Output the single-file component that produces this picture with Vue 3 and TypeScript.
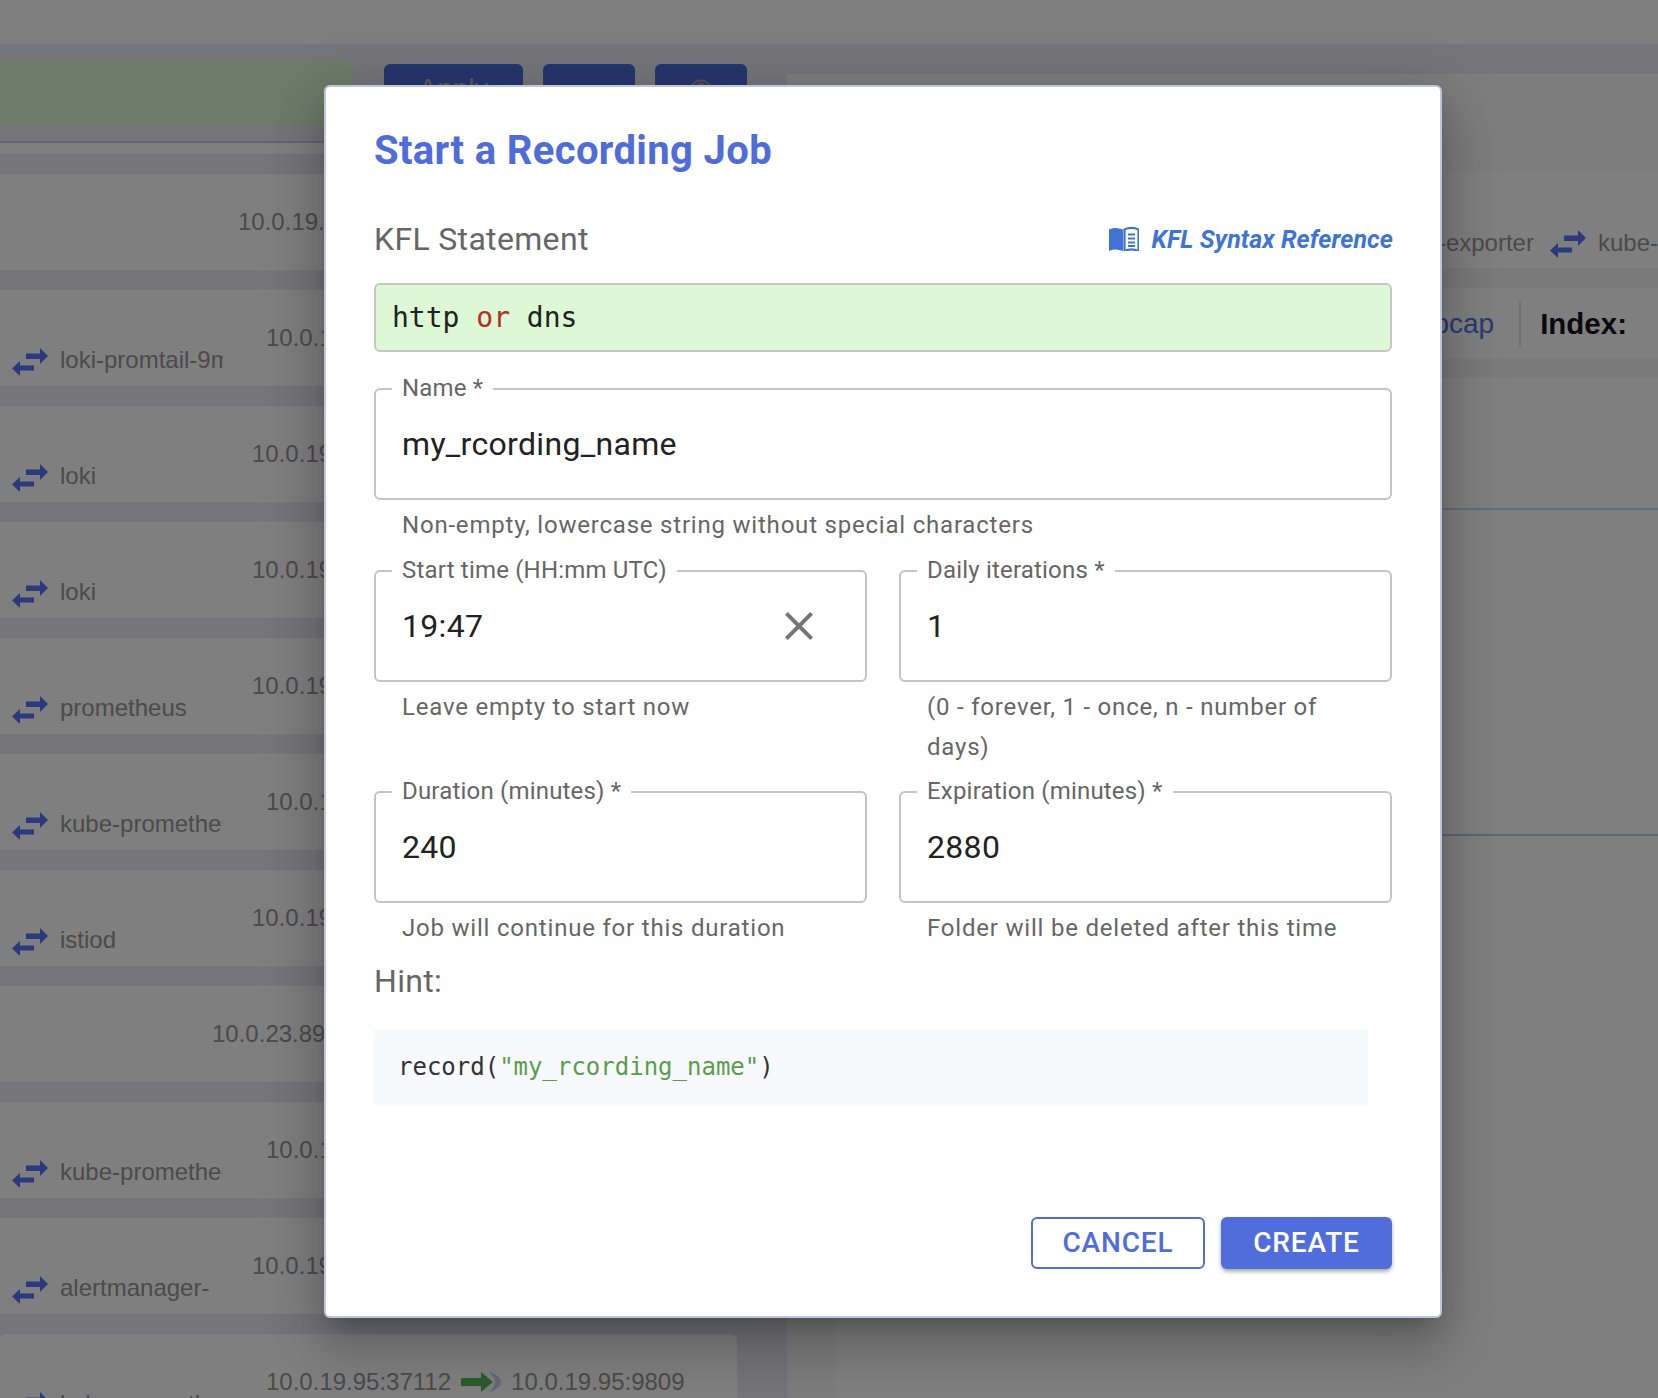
<script setup lang="ts">
// Background traffic rows sit under the dimmed backdrop; the dialog is the real content.
interface TrafficRow {
  name: string
  ip: string
  offset: 'a' | 'b' | 'c' | 'd'
}

const rows: TrafficRow[] = [
  { name: '', ip: '10.0.19.95', offset: 'c' },
  { name: 'loki-promtail-9mvqf', ip: '10.0.19.95', offset: 'a' },
  { name: 'loki', ip: '10.0.19.95', offset: 'b' },
  { name: 'loki', ip: '10.0.19.95', offset: 'b' },
  { name: 'prometheus', ip: '10.0.19.95', offset: 'b' },
  { name: 'kube-prometheus-stack', ip: '10.0.19.95', offset: 'a' },
  { name: 'istiod', ip: '10.0.19.95', offset: 'b' },
  { name: '', ip: '10.0.23.89', offset: 'd' },
  { name: 'kube-prometheus-stack', ip: '10.0.19.95', offset: 'a' },
  { name: 'alertmanager-', ip: '10.0.19.95', offset: 'b' },
]
</script>

<template>
  <div class="page">
    <div class="topbar" />
    <div class="main">
      <div class="left">
        <div class="filter">
          <div class="filter__input" />
          <button type="button" class="filter__btn filter__btn--apply">Apply</button>
          <button type="button" class="filter__btn filter__btn--icon filter__btn--heart">
            <svg width="26" height="22" viewBox="0 0 30 24"><path d="M3 8c0-6 8-6 12-2 4-4 12-4 12 2 0 6-6 10-12 14C9 18 3 14 3 8z" fill="#a4a4a4" /></svg>
          </button>
          <button type="button" class="filter__btn filter__btn--icon">
            <svg width="24" height="24" viewBox="0 0 24 24">
              <circle cx="12" cy="12" r="10.5" fill="none" stroke="#a4a4a4" stroke-width="2" />
              <circle cx="12" cy="8" r="3.5" fill="none" stroke="#a4a4a4" stroke-width="2" />
            </svg>
          </button>
        </div>
        <div class="rows">
          <div v-for="(row, i) in rows" :key="i" class="row">
            <div class="row__name">
              <template v-if="row.name">
                <svg class="swap" viewBox="0 0 36 28"><path d="M14 5.5H28V0L36 8 28 16V11H14Z M8 13 0 20.5 8 28V22.5H22V17.5H8Z" /></svg>
                <span>{{ row.name }}</span>
              </template>
            </div>
            <div class="row__ip" :class="`row__ip--${row.offset}`">{{ row.ip }}</div>
          </div>
          <div class="row row--last">
            <div class="row__name">
              <svg class="swap" viewBox="0 0 36 28"><path d="M14 5.5H28V0L36 8 28 16V11H14Z M8 13 0 20.5 8 28V22.5H22V17.5H8Z" /></svg>
              <span>kube-prometheus-stack</span>
            </div>
            <div class="row__ip row__ip--a">
              <span>10.0.19.95:37112</span>
              <svg class="flow" viewBox="0 0 40 20">
                <path d="M28 0c7 2 12 6 12 10s-5 8-12 10c4-3 6-7 6-10s-2-7-6-10z" fill="#c2d0f5" />
                <path d="M2 6H20V0L32 10 20 20V14H2a4 4 0 0 1 0-8z" fill="#58b85c" />
              </svg>
              <span>10.0.19.95:9809</span>
            </div>
          </div>
        </div>
      </div>
      <div class="right">
        <div class="right__head" />
        <div class="right__names">
          <span>node-exporter</span>
          <svg class="swap" viewBox="0 0 36 28"><path d="M14 5.5H28V0L36 8 28 16V11H14Z M8 13 0 20.5 8 28V22.5H22V17.5H8Z" /></svg>
          <span>kube-</span>
        </div>
        <div class="right__tabs">
          <span class="right__link">pcap</span>
          <span class="right__divider" />
          <strong>Index:</strong>
        </div>
        <div class="right__method">GET</div>
        <div class="right__section" />
      </div>
    </div>

    <div class="backdrop" />

    <section class="dialog" role="dialog" aria-label="Start a Recording Job">
      <h2 class="dialog__title">Start a Recording Job</h2>

      <div class="dialog__kfl-head">
        <span class="dialog__subtitle">KFL Statement</span>
        <a class="dialog__link">
          <svg width="30" height="24" viewBox="0 0 30 24">
            <path d="M0 2.5C4 .5 9 .5 14 2.5V24C9 22 4 22 0 24Z" fill="#3f74d4" />
            <path d="M15.5 2.5C20 .5 25 .5 29.5 2.5V24C25 22 20 22 15.5 24Z" fill="none" stroke="#3f74d4" stroke-width="2.2" />
            <path d="M19 7.5h7M19 11.5h7M19 15.5h7M19 19h7" stroke="#3f74d4" stroke-width="2" />
          </svg>
          KFL Syntax Reference
        </a>
      </div>

      <div class="kfl-input">http <span class="kfl-input__op">or</span> dns</div>

      <div class="field field--name">
        <div class="field__box">
          <label class="field__label">Name *</label>
          <span class="field__value">my_rcording_name</span>
        </div>
        <p class="field__help">Non-empty, lowercase string without special characters</p>
      </div>

      <div class="field-grid">
        <div class="field">
          <div class="field__box">
            <label class="field__label">Start time (HH:mm UTC)</label>
            <span class="field__value">19:47</span>
            <svg class="field__clear" width="48" height="48" viewBox="0 0 24 24">
              <path d="M19 6.41 17.59 5 12 10.59 6.41 5 5 6.41 10.59 12 5 17.59 6.41 19 12 13.41 17.59 19 19 17.59 13.41 12z" fill="#757575" />
            </svg>
          </div>
          <p class="field__help">Leave empty to start now</p>
        </div>
        <div class="field">
          <div class="field__box">
            <label class="field__label">Daily iterations *</label>
            <span class="field__value">1</span>
          </div>
          <p class="field__help">(0 - forever, 1 - once, n - number of days)</p>
        </div>
      </div>

      <div class="field-grid field-grid--last">
        <div class="field">
          <div class="field__box">
            <label class="field__label">Duration (minutes) *</label>
            <span class="field__value">240</span>
          </div>
          <p class="field__help">Job will continue for this duration</p>
        </div>
        <div class="field">
          <div class="field__box">
            <label class="field__label">Expiration (minutes) *</label>
            <span class="field__value">2880</span>
          </div>
          <p class="field__help">Folder will be deleted after this time</p>
        </div>
      </div>

      <div class="dialog__hint">Hint:</div>
      <pre class="code">record(<span class="code__str">"my_rcording_name"</span>)</pre>

      <footer class="dialog__actions">
        <button type="button" class="btn btn--outline">Cancel</button>
        <button type="button" class="btn btn--solid">Create</button>
      </footer>
    </section>
  </div>
</template>

<style scoped>
.page {
  position: relative;
  height: 1398px;
  overflow: hidden;
  background: #e9e9f3;
  font-family: "Liberation Sans", Arial, sans-serif;
}

.topbar {
  height: 44px;
  background: #fcfcfe;
}

.main {
  display: flex;
  gap: 50px;
  padding-top: 16px;
}

.left {
  flex: 0 0 737px;
  min-width: 0;
}

.filter {
  display: flex;
  gap: 20px;
  height: 81px;
  border-bottom: 2px solid #c6c8f0;
  box-sizing: content-box;
}
.filter__input {
  flex: none;
  width: 352px;
  height: 65px;
  margin-right: 12px;
  border-radius: 0 6px 6px 0;
  background: #d8f8d2;
}
.filter__btn {
  display: flex;
  flex: none;
  height: 60px;
  margin-top: 4px;
  border: none;
  border-radius: 6px;
  background: #4f6cd9;
  color: #b4b4b4;
  font-family: inherit;
  justify-content: center;
}
.filter__btn--apply {
  width: 139px;
  padding: 9px 0 0;
  font-size: 28px;
}
.filter__btn--icon {
  width: 92px;
  padding: 15px 0 0;
}
.filter__btn--heart {
  padding-top: 18px;
}

.rows {
  padding-top: 11px;
  background: linear-gradient(#fff 11px, transparent 11px);
}
.row {
  display: flex;
  height: 96px;
  margin-top: 20px;
  align-items: center;
  background: #fff;
  color: #969696;
  font-size: 24px;
}
.row--last {
  border-radius: 6px 6px 0 0;
}
.row__name {
  display: flex;
  flex: 0 0 223px;
  align-self: flex-end;
  box-sizing: border-box;
  width: 223px;
  height: 28px;
  margin-right: -11px;
  margin-bottom: 10px;
  padding-left: 12px;
  overflow: hidden;
  align-items: center;
  gap: 12px;
  white-space: nowrap;
}
.row__name span {
  margin-bottom: 4px;
}
.row__ip {
  display: flex;
  align-items: center;
  white-space: pre;
}
.row__ip--a { margin-left: 54px; }
.row__ip--b { margin-left: 40px; }
.row__ip--c { margin-left: 26px; }
.row__ip--d { margin-left: 0; }

.swap {
  flex: 0 0 36px;
  width: 36px;
  height: 28px;
  fill: #5674f8;
}
.flow {
  width: 40px;
  height: 20px;
  margin: 0 10px;
}

.right {
  flex: 1;
  min-width: 0;
  margin-top: 14px;
  border-radius: 6px 0 0 0;
  background: #fff;
  box-shadow: inset 48px 0 0 #f8f8f8;
  color: #969696;
  font-size: 24px;
}
.right__head {
  height: 98px;
  background: #fafafb;
}
.right__names {
  display: flex;
  box-sizing: border-box;
  height: 116px;
  padding-bottom: 10px;
  justify-content: flex-end;
  align-items: flex-end;
  gap: 12px;
  border-bottom: 20px solid #f4f4f5;
  line-height: 28px;
}
.right__names span {
  margin-bottom: 1px;
}
.right__names .swap {
  margin-left: 4px;
}
.right__tabs {
  display: flex;
  height: 70px;
  padding: 1px 31px 0 0;
  box-sizing: content-box;
  justify-content: flex-end;
  align-items: center;
  border-bottom: 19px solid #f4f4f5;
  font-size: 28px;
}
.right__link {
  color: #5674e0;
}
.right__divider {
  width: 2px;
  height: 44px;
  margin: 0 19px 0 25px;
  background: #dedee4;
}
.right__tabs strong {
  color: #14141c;
  font-size: 29.5px;
}
.right__method {
  box-sizing: border-box;
  height: 132px;
  padding: 50px 0 0 562px;
  border-bottom: 2px solid #c8d4ff;
  color: #5674e0;
  font-size: 28px;
  line-height: 34px;
}
.right__section {
  height: 326px;
  box-sizing: border-box;
  border-bottom: 2px solid #bcc6f0;
}

.backdrop {
  position: absolute;
  inset: 0;
  background: rgba(0, 0, 0, 0.5);
}

.dialog {
  position: absolute;
  top: 85px;
  left: 324px;
  display: flex;
  flex-direction: column;
  box-sizing: border-box;
  width: 1118px;
  height: 1233px;
  padding: 40px 48px 47px;
  border: 2px solid #bcc6dd;
  border-radius: 6px;
  background: #fff;
  box-shadow:
    0 14px 20px -9px rgba(0, 0, 0, 0.2),
    0 31px 50px 4px rgba(0, 0, 0, 0.14),
    0 12px 60px 10px rgba(0, 0, 0, 0.12);
  font-family: Roboto, "Liberation Sans", sans-serif;
}

.dialog__title {
  margin: 0;
  color: #4f6cd9;
  font-size: 40px;
  font-weight: 700;
  line-height: 48px;
  letter-spacing: 0.35px;
}

.dialog__kfl-head {
  display: flex;
  height: 40px;
  margin-top: 44px;
  justify-content: space-between;
  align-items: center;
}
.dialog__subtitle {
  color: #666;
  font-size: 32px;
  letter-spacing: 0.33px;
}
.dialog__link {
  display: flex;
  margin-right: -1px;
  align-items: center;
  gap: 12px;
  color: #3f74d4;
  font-size: 25px;
  font-style: italic;
  font-weight: 700;
  letter-spacing: 0.1px;
}

.kfl-input {
  box-sizing: border-box;
  height: 69px;
  margin-top: 24px;
  padding-left: 16px;
  border: 2px solid #c6c6c6;
  border-radius: 6px;
  background: #dcf8d4;
  color: #222;
  font-family: "DejaVu Sans Mono", "Liberation Mono", monospace;
  font-size: 28px;
  line-height: 65px;
  white-space: pre;
}
.kfl-input__op {
  color: #b5302a;
}

.field--name {
  margin-top: 36px;
}
.field__box {
  position: relative;
  display: flex;
  box-sizing: border-box;
  height: 112px;
  padding: 0 26px;
  align-items: center;
  border: 2px solid #c4c4c4;
  border-radius: 6px;
}
.field__label {
  position: absolute;
  top: -16px;
  left: 16px;
  padding: 0 10px;
  background: #fff;
  color: #666;
  font-size: 24px;
  line-height: 28px;
  letter-spacing: 0.008em;
}
.field__value {
  color: #222;
  font-size: 32px;
  letter-spacing: 0.01em;
}
.field__clear {
  position: absolute;
  top: 30px;
  right: 42px;
}
.field__help {
  margin: 5px 0 0;
  padding: 0 28px;
  color: #666;
  font-size: 24px;
  line-height: 40px;
  letter-spacing: 0.033em;
}

.field-grid {
  display: grid;
  grid-template-columns: 1fr 1fr;
  gap: 32px;
  margin-top: 25px;
}
.field-grid--last {
  margin-top: 24px;
}

.dialog__hint {
  margin-top: 11px;
  color: #666;
  font-size: 32px;
  line-height: 44px;
  letter-spacing: 0.33px;
}

.code {
  box-sizing: border-box;
  width: 994px;
  height: 76px;
  margin: 26px 0 0;
  padding-left: 24px;
  background: #f8f9fd;
  color: #333;
  font-family: "DejaVu Sans Mono", "Liberation Mono", monospace;
  font-size: 24px;
  line-height: 76px;
}
.code__str {
  color: #5a9e4b;
}

.dialog__actions {
  display: flex;
  margin-top: auto;
  justify-content: flex-end;
  gap: 16px;
}
.btn {
  height: 52px;
  padding: 0 0 2px;
  border-radius: 6px;
  font-family: inherit;
  font-size: 28px;
  font-weight: 500;
  letter-spacing: 0.03em;
  text-transform: uppercase;
}
.btn--outline {
  width: 174px;
  border: 2px solid #506ddb;
  background: #fff;
  color: #506ddb;
}
.btn--solid {
  width: 171px;
  border: none;
  background: #506ddb;
  color: #fff;
  box-shadow: 0 3px 5px -1px rgba(0, 0, 0, 0.3), 0 2px 4px rgba(0, 0, 0, 0.14);
}
</style>
